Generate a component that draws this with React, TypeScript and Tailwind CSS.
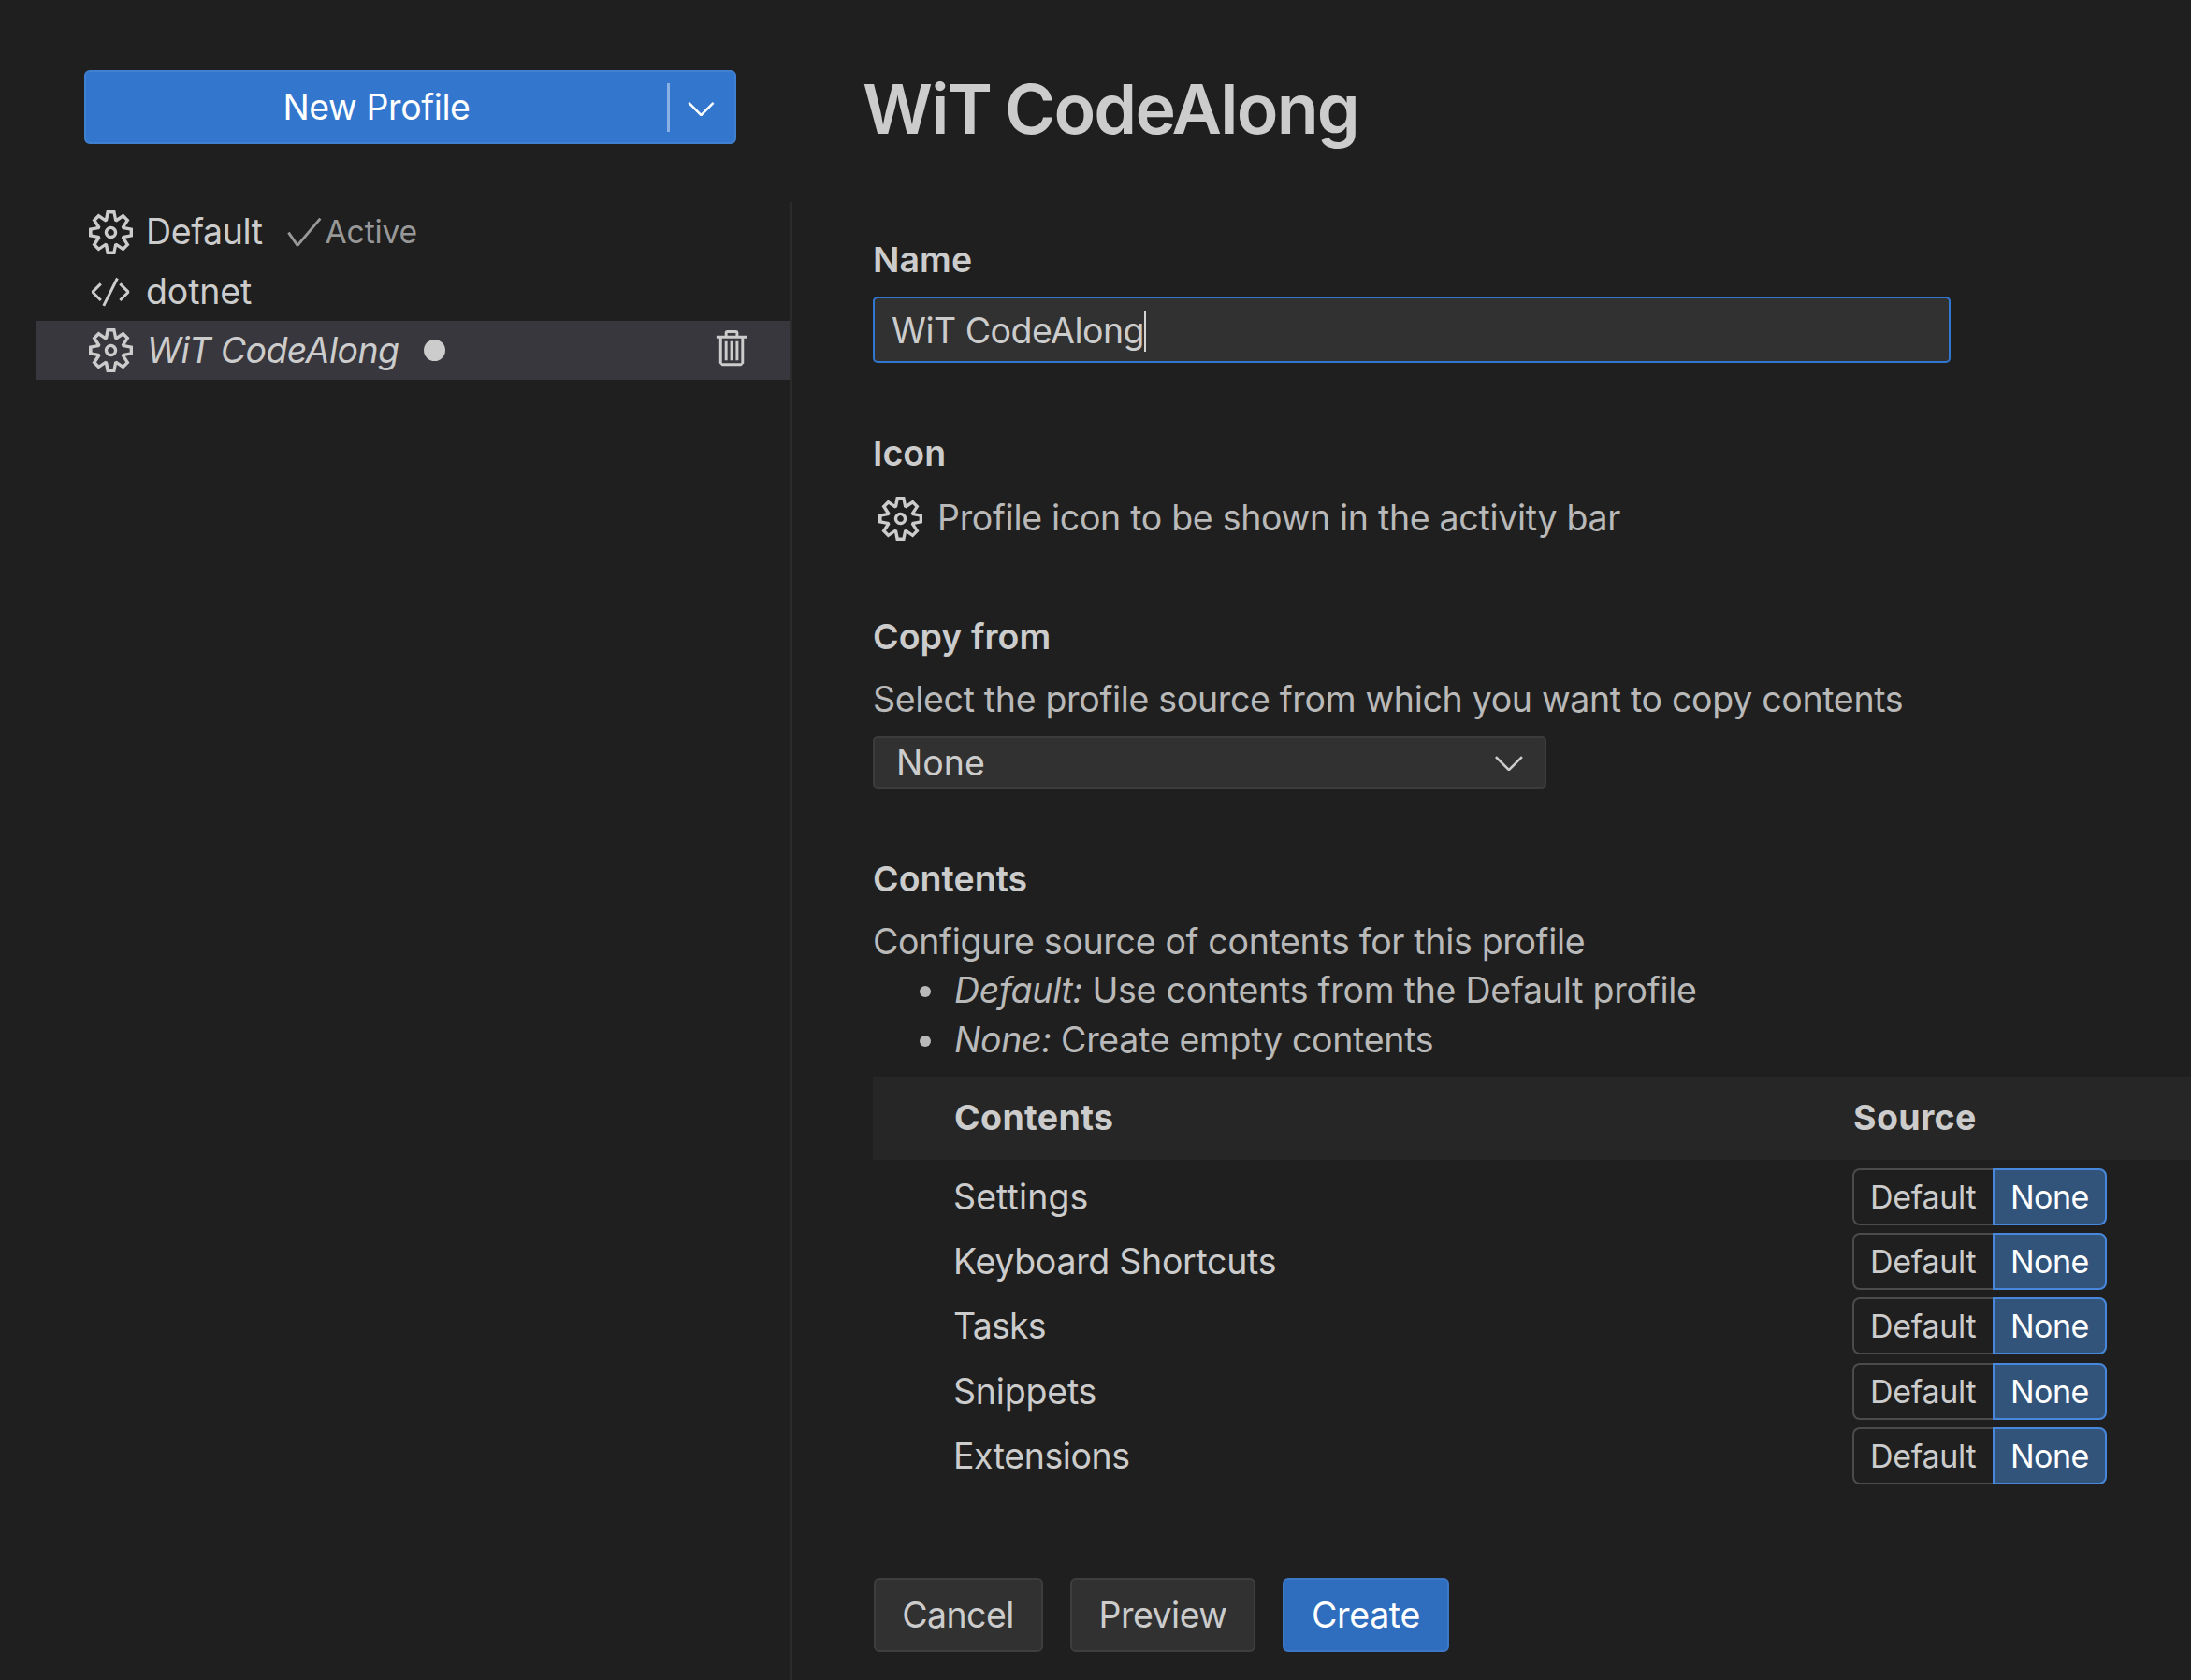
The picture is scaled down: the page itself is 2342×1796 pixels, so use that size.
import * as React from "react";
import {
  VscCheck,
  VscChevronDown,
  VscCode,
  VscSettingsGear,
  VscTrash,
} from "react-icons/vsc";

const contents = [
  { label: "Settings", tracking: "tracking-[0.1px]" },
  { label: "Keyboard Shortcuts", tracking: "tracking-[-0.3px]" },
  { label: "Tasks", tracking: "tracking-[-0.8px]" },
  { label: "Snippets", tracking: "tracking-[-0.2px]" },
  { label: "Extensions", tracking: "tracking-[-0.45px]" },
];

function Sidebar() {
  return (
    <aside className="flex w-[847px] shrink-0 flex-col">
      <div className="h-[216px] pt-[75px] pl-[90px]">
        <button className="flex h-[79px] w-[697px] items-center rounded-[6px] border-2 border-[#4080d1] bg-[#3376cd] text-white">
          <span className="w-[621px] text-center tracking-[-0.4px]">New Profile</span>
          <span className="h-[52px] w-[3px] bg-[#8bb1e4]" />
          <VscChevronDown className="mt-0.5 ml-[11px] size-[45px]" />
        </button>
      </div>
      <div className="flex-1 border-r-[3px] border-[#2b2b2b] pt-px pl-[38px]">
        <div className="flex h-[63px] items-center pl-[57px]">
          <VscSettingsGear className="-mt-px size-[47px]" />
          <span className="ml-[14px] -mt-0.5 tracking-[-0.4px]">Default</span>
          <span className="ml-[21px] -mt-0.5 flex items-center text-[33.7px] tracking-[-0.2px] text-[#989898]">
            <VscCheck className="size-[46px]" />
            Active
          </span>
        </div>
        <div className="flex h-[63px] items-center pl-[57px]">
          <VscCode className="size-[47px]" />
          <span className="ml-[14px] tracking-[-0.15px]">dotnet</span>
        </div>
        <div className="flex h-[63px] items-center bg-[#37373d] pr-[37px] pl-[57px]">
          <VscSettingsGear className="-mt-px size-[47px]" />
          <span className="ml-[15px] tracking-[-0.55px] italic">WiT CodeAlong</span>
          <span className="ml-[26px] size-[23px] rounded-full bg-[#cccccc]" />
          <VscTrash className="-mt-0.5 ml-auto size-[47px]" />
        </div>
      </div>
    </aside>
  );
}

function Heading({ children }: { children: React.ReactNode }) {
  return <h2 className="h-[50px] leading-[52px] font-semibold tracking-[0.04px]">{children}</h2>;
}

function Description({ children }: { children: React.ReactNode }) {
  return (
    <p className="mt-[17px] h-[50px] leading-[52px] tracking-[-0.32px] text-[#b9b9b9]">
      {children}
    </p>
  );
}

function SourceToggle() {
  return (
    <div className="flex h-[61px] w-[272px] text-[34px] font-[430]">
      <span className="flex w-[150px] items-center rounded-l-[8px] border-2 border-r-0 border-[#4b4b4b] pt-px pl-[17px] tracking-[-0.3px]">
        Default
      </span>
      <span className="flex w-[122px] items-center rounded-r-[8px] border-2 border-[#4788dc] bg-[#32547b] pt-px pl-[17px] tracking-[-0.5px] text-white">
        None
      </span>
    </div>
  );
}

function ProfileForm() {
  return (
    <main className="flex-1 pt-[71px] pl-[86px]">
      <h1 className="-ml-[11px] h-[90px] text-[73.5px] leading-[92px] font-semibold tracking-[-1.8px] [word-spacing:-2px]">
        WiT CodeAlong
      </h1>

      <section className="mt-[91px]">
        <Heading>Name</Heading>
        <div className="mt-[15px] flex h-[71px] w-[1152px] items-center rounded-[5px] border-2 border-[#3277cf] bg-[#313131] pt-0.5 pl-[18px]">
          <span className="tracking-[-0.52px]">WiT CodeAlong</span>
          <span className="h-[44px] w-[2px] bg-[#d4d4d4]" />
        </div>
      </section>

      <section className="mt-[71px]">
        <Heading>Icon</Heading>
        <div className="mt-[22px] flex h-[48px] items-center pl-[6px]">
          <VscSettingsGear className="-mt-px size-[47px]" />
          <span className="ml-[16px] pb-0.5 tracking-[-0.3px] text-[#b9b9b9]">
            Profile icon to be shown in the activity bar
          </span>
        </div>
      </section>

      <section className="mt-[76px]">
        <Heading>Copy from</Heading>
        <Description>Select the profile source from which you want to copy contents</Description>
        <div className="mt-[15px] flex h-[56px] w-[720px] items-center justify-between rounded-[5px] border-2 border-[#3c3c3c] bg-[#313131] pr-[14px] pl-[23px]">
          <span className="pt-0.5">None</span>
          <VscChevronDown className="-mt-px size-[48px]" />
        </div>
      </section>

      <section className="mt-[71px]">
        <Heading>Contents</Heading>
        <Description>Configure source of contents for this profile</Description>
        <ul className="mt-px text-[#b9b9b9]">
          <li className="flex h-[53px] items-center pl-[50px]">
            <span className="mt-[3px] mr-[25px] size-[12px] rounded-full bg-[#b9b9b9]" />
            <span className="tracking-[-0.24px]">
              <em className="tracking-[-0.3px]">Default:</em> Use contents from the Default profile
            </span>
          </li>
          <li className="flex h-[53px] items-center pl-[50px]">
            <span className="mt-[3px] mr-[25px] size-[12px] rounded-full bg-[#b9b9b9]" />
            <span className="tracking-[-0.3px]">
              <em>None:</em> Create empty contents
            </span>
          </li>
        </ul>
        <div className="mt-[13px] flex h-[89px] items-center bg-[#262626] pb-[2px] font-bold tracking-[0.34px]">
          <span className="w-[961px] pl-[87px]">Contents</span>
          <span className="w-[961px] pl-[87px]">Source</span>
        </div>
        <div className="pt-[4.8px]">
          {contents.map(({ label, tracking }) => (
            <div key={label} className="flex h-[69.25px] items-center">
              <span className={`w-[1047px] pt-px pl-[86px] ${tracking}`}>{label}</span>
              <SourceToggle />
            </div>
          ))}
        </div>
      </section>

      <div className="mt-[96px] ml-px flex gap-[29px]">
        <button className="h-[79px] w-[181px] rounded-[6px] border-2 border-[#3e3e3e] bg-[#313131] pr-px tracking-[-0.55px]">
          Cancel
        </button>
        <button className="h-[79px] w-[198px] rounded-[6px] border-2 border-[#3e3e3e] bg-[#313131] tracking-[-0.5px]">
          Preview
        </button>
        <button className="h-[79px] w-[178px] rounded-[6px] border-2 border-[#3c78c6] bg-[#2f6dbe] tracking-[-0.35px] text-white">
          Create
        </button>
      </div>
    </main>
  );
}

export default function App() {
  return (
    <div className="flex h-[1796px] w-full overflow-hidden bg-[#1f1f1f] font-['Inter',sans-serif] text-[37.5px] leading-[50px] font-[430] whitespace-nowrap text-[#cccccc]">
      <Sidebar />
      <ProfileForm />
    </div>
  );
}
